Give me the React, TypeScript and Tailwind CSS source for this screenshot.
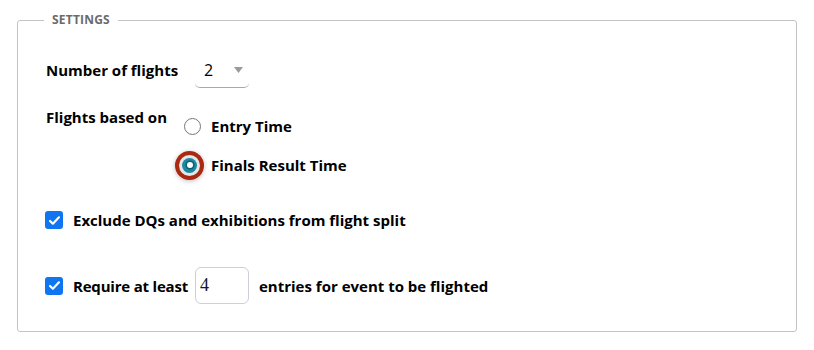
import React from "react";

function Check() {
  return (
    <span className="flex h-[18px] w-[18px] shrink-0 items-center justify-center rounded-[3px] bg-[#0f75f0]">
      <svg width="13" height="13" viewBox="0 0 16 16" fill="none">
        <path d="M2.5 8.5l3.5 3.5 7.5-8" stroke="white" strokeWidth="2.6" strokeLinecap="round" strokeLinejoin="round" />
      </svg>
    </span>
  );
}

export default function App() {
  return (
    <div
      className="h-[350px] w-[814px] bg-white px-[17px] pt-[13px] text-black"
      style={{ fontFamily: '"Open Sans", "Noto Sans", sans-serif' }}
    >
      <fieldset className="rounded-[3px] border border-[#c4c4c4] pl-[28px] pt-[25px] pb-[27px]">
        <legend className="-ml-[2px] px-[8px] text-[12px] font-bold uppercase leading-[14px] tracking-[0.2px] text-[#6b6b6b]">
          Settings
        </legend>

        {/* number of flights */}
        <div className="flex h-[36px] items-center">
          <span className="text-[15px] font-bold leading-[20px]">Number of flights</span>
          <div className="ml-[17px] flex h-[36px] w-[54px] items-center justify-between rounded-b-[5px] border-b border-[#a8a8a8] pl-[9px] pr-[6px]">
            <span className="text-[16px] leading-[20px]">2</span>
            <svg width="9" height="6" viewBox="0 0 9 6">
              <path d="M0 0h9L4.5 6z" fill="#9a9a9a" />
            </svg>
          </div>
        </div>

        {/* flights based on */}
        <div className="mt-[19px] flex items-start">
          <span className="w-[138px] text-[15px] font-bold leading-[20px]">Flights based on</span>
          <div className="mt-[9px] flex flex-col gap-[19px]">
            <label className="flex h-[20px] items-center">
              <span className="w-[27px]">
                <span className="block h-[17px] w-[17px] rounded-full border border-[#767676] bg-white" />
              </span>
              <span className="text-[15px] font-bold leading-[20px]">Entry Time</span>
            </label>
            <label className="flex h-[20px] items-center">
              <span className="w-[27px]">
                <span className="-ml-[2px] flex h-[15px] w-[15px] items-center justify-center rounded-full bg-[#1a8aa2] shadow-[0_0_0_3px_#e6e6e6,0_0_0_7px_#ab2812,0_1px_5px_7px_rgba(0,0,0,0.25)]">
                  <span className="h-[6px] w-[6px] rounded-full bg-white ring-[1.5px] ring-[#0d5f70]" />
                </span>
              </span>
              <span className="text-[15px] font-bold leading-[20px]">Finals Result Time</span>
            </label>
          </div>
        </div>

        {/* exclude */}
        <label className="-ml-[1px] mt-[35px] flex h-[20px] items-center gap-[10px]">
          <Check />
          <span className="text-[15px] font-bold leading-[20px]">Exclude DQs and exhibitions from flight split</span>
        </label>

        {/* require at least */}
        <div className="-ml-[1px] mt-[37px] flex h-[37px] items-center">
          <Check />
          <span className="ml-[10px] text-[15px] font-bold leading-[20px] tracking-[-0.2px]">Require at least</span>
          <div
            className="ml-[7px] flex h-[37px] w-[54px] items-center rounded-[6px] border border-[#cfcfd6] pl-[4px] text-[18px] text-[#101830]"
            style={{ fontFamily: '"Liberation Serif", serif' }}
          >
            4
          </div>
          <span className="ml-[10px] text-[15px] font-bold leading-[20px]">entries for event to be flighted</span>
        </div>
      </fieldset>
    </div>
  );
}
